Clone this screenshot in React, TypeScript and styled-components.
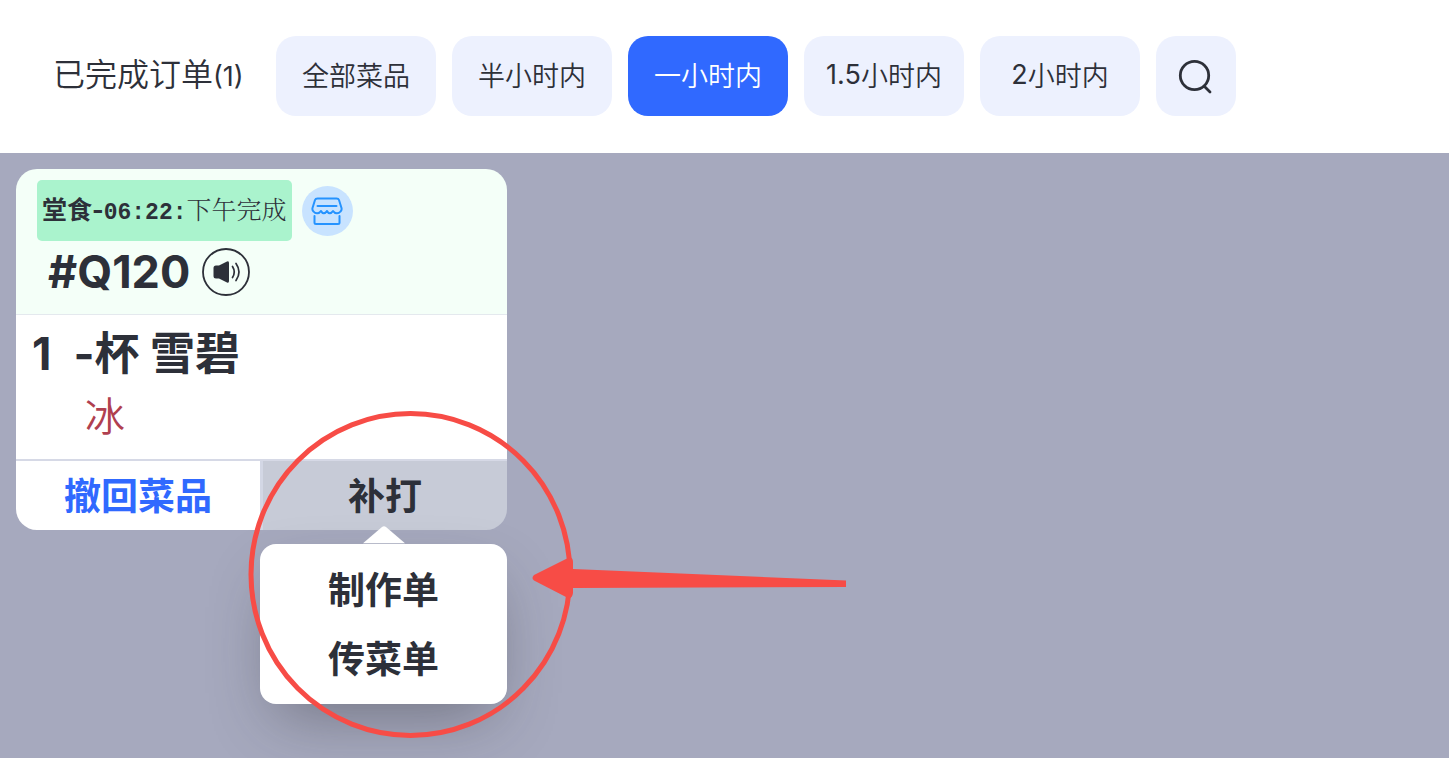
import React from "react";
import styled, { createGlobalStyle } from "styled-components";

const GlobalStyle = createGlobalStyle`
  * { box-sizing: border-box; }
  body {
    margin: 0;
    background: #a6a9be;
    color: #2d3039;
    font-family: Inter, "Noto Sans CJK SC", sans-serif;
  }
  button {
    margin: 0;
    padding: 0;
    border: 0;
    color: inherit;
    font: inherit;
    cursor: pointer;
  }
  h1, h2, p { margin: 0; padding: 0; font-weight: inherit; }
`;

const Page = styled.div`
  min-height: 100vh;
`;

const Toolbar = styled.header`
  display: flex;
  align-items: center;
  gap: 16px;
  padding: 36px 53px 37px;
  background: #fff;
`;

const Title = styled.h1`
  flex: 0 0 207px;
  font-size: 32px;
  line-height: 40px;
  font-weight: 350;
  white-space: nowrap;
`;

const Count = styled.span`
  font-size: 27px;
  font-weight: 400;
`;

const Filters = styled.nav`
  display: flex;
  gap: 16px;
`;

const FilterButton = styled.button<{ $active?: boolean }>`
  display: flex;
  align-items: center;
  justify-content: center;
  width: 160px;
  height: 80px;
  padding-bottom: 3px;
  border-radius: 20px;
  background: ${(p) => (p.$active ? "#3069ff" : "#edf1fe")};
  color: ${(p) => (p.$active ? "#fff" : "inherit")};
  font-size: 27px;
  font-weight: 350;
  white-space: nowrap;
`;

const SearchButton = styled(FilterButton)`
  width: 80px;
  padding-bottom: 0;
`;

const Digits = styled.span`
  font-weight: 400;
`;

const Board = styled.main`
  display: flex;
  align-items: flex-start;
  padding: 16px;
`;

const Card = styled.article`
  position: relative;
  width: 491px;
`;

const CardHead = styled.div`
  padding: 11px 21px 15px;
  border-bottom: 1px solid #e4e9ee;
  border-radius: 21px 21px 0 0;
  background: #f4fff8;
`;

const TagRow = styled.div`
  display: flex;
  align-items: center;
  gap: 10px;
`;

const Tag = styled.p`
  padding: 0 5px;
  border-radius: 5px;
  background: #aaf3cd;
  font-size: 25px;
  line-height: 61px;
  font-weight: 700;
  white-space: nowrap;
`;

const Clock = styled.span`
  font-family: "Liberation Mono", monospace;
  font-size: 23px;
  line-height: 1;
`;

const Status = styled.span`
  font-family: "Noto Serif CJK SC", "Noto Sans CJK SC", serif;
  font-weight: 350;
  line-height: 1;
`;

const StoreBadge = styled.span`
  display: flex;
  align-items: center;
  justify-content: center;
  width: 51px;
  height: 50px;
  border-radius: 50%;
  background: #c8e3ff;
`;

const NumberRow = styled.div`
  display: flex;
  align-items: center;
  gap: 12px;
  padding: 4px 11px 0;
`;

const OrderNumber = styled.h2`
  font-size: 45px;
  line-height: 54px;
  font-weight: 700;
`;

const SpeakButton = styled.button`
  display: flex;
  width: 48px;
  height: 48px;
  background: none;
`;

const CardBody = styled.div`
  padding: 7px 16px 12px;
  background: #fff;
`;

const Dish = styled.p`
  display: flex;
  gap: 22px;
  font-size: 45px;
  line-height: 64px;
  font-weight: 700;
`;

const DishNote = styled.p`
  padding: 1px 0 0 53px;
  color: #b0404f;
  font-size: 40px;
  line-height: 60px;
  font-weight: 350;
`;

const Actions = styled.div`
  display: grid;
  grid-template-columns: 1fr 247px;
  border-top: 2px solid #d6d9e6;
`;

const Action = styled.button<{ $muted?: boolean }>`
  width: 100%;
  padding-top: 2px;
  border-left: ${(p) => (p.$muted ? "3px solid #d3d7e5" : "0")};
  border-radius: ${(p) => (p.$muted ? "0 0 21px 0" : "0 0 0 21px")};
  background: ${(p) => (p.$muted ? "#c7cbd7" : "#fff")};
  color: ${(p) => (p.$muted ? "inherit" : "#3069ff")};
  font-size: 37px;
  line-height: 67px;
  font-weight: 700;
`;

const MenuAnchor = styled.div`
  position: relative;
`;

const Menu = styled.div`
  position: absolute;
  top: calc(100% + 14px);
  left: 0;
  right: 0;
  padding: 12px 0 10px;
  border-radius: 16px;
  background: #fff;
  box-shadow: 0 26px 64px -16px rgba(40, 40, 45, 0.42);
`;

const MenuPointer = styled.svg`
  position: absolute;
  bottom: 100%;
  left: 50%;
  margin-left: -21px;
`;

const MenuItem = styled.button`
  display: block;
  width: 100%;
  background: none;
  font-size: 37px;
  line-height: 69px;
  font-weight: 700;
`;

const Annotation = styled.svg`
  position: absolute;
  top: 240px;
  left: 232px;
  pointer-events: none;
`;

const filters = [
  { digits: "", label: "全部菜品" },
  { digits: "", label: "半小时内" },
  { digits: "", label: "一小时内", active: true },
  { digits: "1.5", label: "小时内" },
  { digits: "2", label: "小时内" },
];

function SearchIcon() {
  return (
    <svg width="36" height="36" viewBox="0 0 36 36" fill="none" stroke="#2d3039" strokeWidth="2.8" strokeLinecap="round">
      <circle cx="16.5" cy="17.5" r="14.2" />
      <path d="M26.5 28.5 32 34" />
    </svg>
  );
}

function StoreIcon() {
  return (
    <svg width="32" height="28" viewBox="0 0 32 28" fill="none" stroke="#2593ff" strokeWidth="2" strokeLinecap="round" strokeLinejoin="round">
      <path d="M6.5 1.5H25.5Q27.5 1.5 28 3L30.5 11Q31 13 29.5 14.5C27.5 17 24 17 22 14C20 17 17.5 17 16 14C14 17 11.5 17 10 14C8 17 4.5 17 2.5 14.5Q1 13 1.5 11L4 3Q4.5 1.5 6.5 1.5Z" />
      <path d="M6.5 9H25.5" />
      <path d="M3.5 19V25.5Q3.5 27 5 27H27Q28.5 27 28.5 25.5V19" />
    </svg>
  );
}

function SpeakerIcon() {
  return (
    <svg width="48" height="48" viewBox="0 0 48 48" fill="none" stroke="#2d3039" strokeLinecap="round">
      <circle cx="24" cy="24" r="23" strokeWidth="1.8" />
      <path d="M11.5 20Q11.5 17.5 14 17.5H17L25 13.5Q27 12.5 27 15V33Q27 35.5 25 34.5L17 30.5H14Q11.5 30.5 11.5 28Z" fill="#2d3039" stroke="none" />
      <path d="M30.5 18.5Q34 24 30.5 29.5M34 15.5Q40 24 34 32.5" strokeWidth="1.7" />
    </svg>
  );
}

export default function App() {
  return (
    <Page>
      <GlobalStyle />
      <Toolbar>
        <Title>
          已完成订单<Count>(1)</Count>
        </Title>
        <Filters>
          {filters.map((f) => (
            <FilterButton key={f.digits + f.label} $active={f.active}>
              {f.digits && <Digits>{f.digits}</Digits>}
              {f.label}
            </FilterButton>
          ))}
          <SearchButton aria-label="搜索">
            <SearchIcon />
          </SearchButton>
        </Filters>
      </Toolbar>
      <Board>
        <Card>
          <CardHead>
            <TagRow>
              <Tag>
                堂食-<Clock>06:22:</Clock>
                <Status>下午完成</Status>
              </Tag>
              <StoreBadge>
                <StoreIcon />
              </StoreBadge>
            </TagRow>
            <NumberRow>
              <OrderNumber>#Q120</OrderNumber>
              <SpeakButton aria-label="播报">
                <SpeakerIcon />
              </SpeakButton>
            </NumberRow>
          </CardHead>
          <CardBody>
            <Dish>
              <span>1</span>
              <span>-杯 雪碧</span>
            </Dish>
            <DishNote>冰</DishNote>
          </CardBody>
          <Actions>
            <Action>撤回菜品</Action>
            <MenuAnchor>
              <Action $muted aria-haspopup="true" aria-expanded="true">
                补打
              </Action>
              <Menu>
                <MenuPointer width="42" height="18" viewBox="0 0 42 18">
                  <path d="M0 17.2 19 1Q21 -0.5 23 1L42 17.2Z" fill="#fff" />
                </MenuPointer>
                <MenuItem>制作单</MenuItem>
                <MenuItem>传菜单</MenuItem>
              </Menu>
            </MenuAnchor>
          </Actions>
          <Annotation width="600" height="330" viewBox="0 0 600 330" aria-hidden="true">
            <ellipse cx="162.5" cy="165.5" rx="159.5" ry="161" fill="none" stroke="#f74c46" strokeWidth="5" />
            <path d="M286 166 319 149.500Q325 147 325 153V160L598 171.500V178L325 179V184Q324 191 319 188.500L286 171.500Q283 169 286 166Z" fill="#f74c46" />
          </Annotation>
        </Card>
      </Board>
    </Page>
  );
}
